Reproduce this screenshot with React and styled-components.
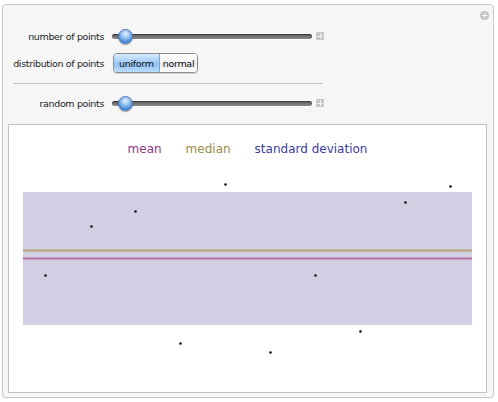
import React from 'react';
import styled, { createGlobalStyle } from 'styled-components';

const GlobalStyle = createGlobalStyle`
  body {
    margin: 0;
    background: #ffffff;
    font-family: "DejaVu Sans", "Liberation Sans", sans-serif;
  }
`;

const Panel = styled.div`
  position: relative;
  box-sizing: border-box;
  width: 492px;
  height: 394px;
  margin: 4px 0 0 2px;
  padding: 21px 0 0 0;
  background: #f6f6f6;
  border: 1px solid #c9c9c9;
  border-radius: 4px;
  box-shadow: 0 1px 1px rgba(0, 0, 0, 0.06);
`;

const CornerButton = styled.div`
  position: absolute;
  top: 6px;
  right: 4px;
  width: 9px;
  height: 9px;
  border-radius: 50%;
  background: #c4c4c4;
  display: flex;
  align-items: center;
  justify-content: center;
  color: #f6f6f6;
  font-size: 9px;
  font-weight: bold;
  line-height: 1;
`;

const Controls = styled.div`
  display: flex;
  flex-direction: column;
`;

const Row = styled.div`
  display: flex;
  align-items: center;
  height: 20px;
  margin-bottom: ${p => p.gap || 0}px;
`;

const Label = styled.div`
  width: 101px;
  margin-right: 8px;
  text-align: right;
  font-size: 9.5px;
  letter-spacing: -0.35px;
  color: #222;
  white-space: nowrap;
`;

const Track = styled.div`
  position: relative;
  width: 200px;
  height: 5px;
  border-radius: 3px;
  background: linear-gradient(#5c5c5c, #8a8a8a);
  box-shadow: inset 0 1px 1px rgba(0, 0, 0, 0.4), 0 1px 0 #ffffff;
`;

const Thumb = styled.div`
  position: absolute;
  top: -5px;
  left: ${p => p.pos}px;
  width: 15px;
  height: 15px;
  border-radius: 50%;
  box-sizing: border-box;
  border: 1px solid #4a78b8;
  background: radial-gradient(circle at 50% 30%, #e6f1ff 0%, #9cc4f0 35%, #3f86dc 75%, #2a64b4 100%);
  box-shadow: 0 1px 1px rgba(0, 0, 0, 0.35);
`;

const PlusBox = styled.div`
  width: 8px;
  height: 8px;
  margin-left: 4px;
  background: #c8c8c8;
  position: relative;
  &::before, &::after {
    content: '';
    position: absolute;
    background: #f2f2f2;
  }
  &::before { left: 1px; right: 1px; top: 3.5px; height: 1px; }
  &::after { top: 1px; bottom: 1px; left: 3.5px; width: 1px; }
`;

const Toggle = styled.div`
  display: flex;
  height: 18px;
  margin-left: 1px;
  border: 1px solid #8c8c8c;
  border-radius: 4px;
  overflow: hidden;
  box-shadow: 0 1px 1px rgba(0, 0, 0, 0.15);
`;

const ToggleItem = styled.div`
  display: flex;
  align-items: center;
  padding: 0 ${p => p.pad}px;
  font-size: 9.5px;
  letter-spacing: -0.3px;
  color: #111;
  background: ${p => (p.active
    ? 'linear-gradient(#d6eaff, #9fcaf6 50%, #8dc0f4 51%, #b9dcff)'
    : 'linear-gradient(#ffffff, #f1f1f1 50%, #e8e8e8 51%, #ffffff)')};
  border-right: ${p => (p.active ? '1px solid #7ea6d2' : 'none')};
`;

const Divider = styled.div`
  width: 310px;
  height: 1px;
  margin: 10px 0 9px 10px;
  background: #c6c6c6;
`;

const Output = styled.div`
  box-sizing: border-box;
  width: 479px;
  height: 269px;
  margin: 11px 0 0 5px;
  background: #ffffff;
  border: 1px solid #c2c2c2;
  display: flex;
  flex-direction: column;
`;

const Legend = styled.div`
  display: flex;
  justify-content: center;
  gap: 24px;
  height: 40px;
  padding-top: 17px;
  box-sizing: border-box;
  font-size: 12px;
`;

const LegendItem = styled.span`
  color: ${p => p.color};
`;

const Plot = styled.svg`
  display: block;
`;

const points = [
  [36, 110], [82, 61], [126, 46], [216, 19], [171, 178],
  [261, 187], [306, 110], [351, 166], [396, 37], [441, 21],
];

function Slider({ label, pos }) {
  return (
    <>
      <Label>{label}</Label>
      <Track>
        <Thumb pos={pos} />
      </Track>
      <PlusBox />
    </>
  );
}

export default function App() {
  return (
    <>
      <GlobalStyle />
      <Panel>
        <CornerButton>+</CornerButton>
        <Controls>
          <Row gap={7}>
            <Slider label="number of points" pos={6} />
          </Row>
          <Row>
            <Label>distribution of points</Label>
            <Toggle>
              <ToggleItem active pad={5}>uniform</ToggleItem>
              <ToggleItem pad={3}>normal</ToggleItem>
            </Toggle>
          </Row>
          <Divider />
          <Row>
            <Slider label="random points" pos={6} />
          </Row>
        </Controls>
        <Output>
          <Legend>
            <LegendItem color="#8e3a7f">mean</LegendItem>
            <LegendItem color="#9c8c48">median</LegendItem>
            <LegendItem color="#3b3b9c">standard deviation</LegendItem>
          </Legend>
          <Plot width="477" height="227" viewBox="0 0 477 227">
            <rect x="14" y="27" width="449" height="133" fill="#d0cfe4" />
            <rect x="14" y="84.5" width="449" height="2" fill="#b4a676" />
            <rect x="14" y="92.5" width="449" height="2" fill="#b86ca6" />
            {points.map(([x, y], i) => (
              <circle key={i} cx={x + 0.5} cy={y + 0.5} r="1.3" fill="#111" />
            ))}
          </Plot>
        </Output>
      </Panel>
    </>
  );
}
